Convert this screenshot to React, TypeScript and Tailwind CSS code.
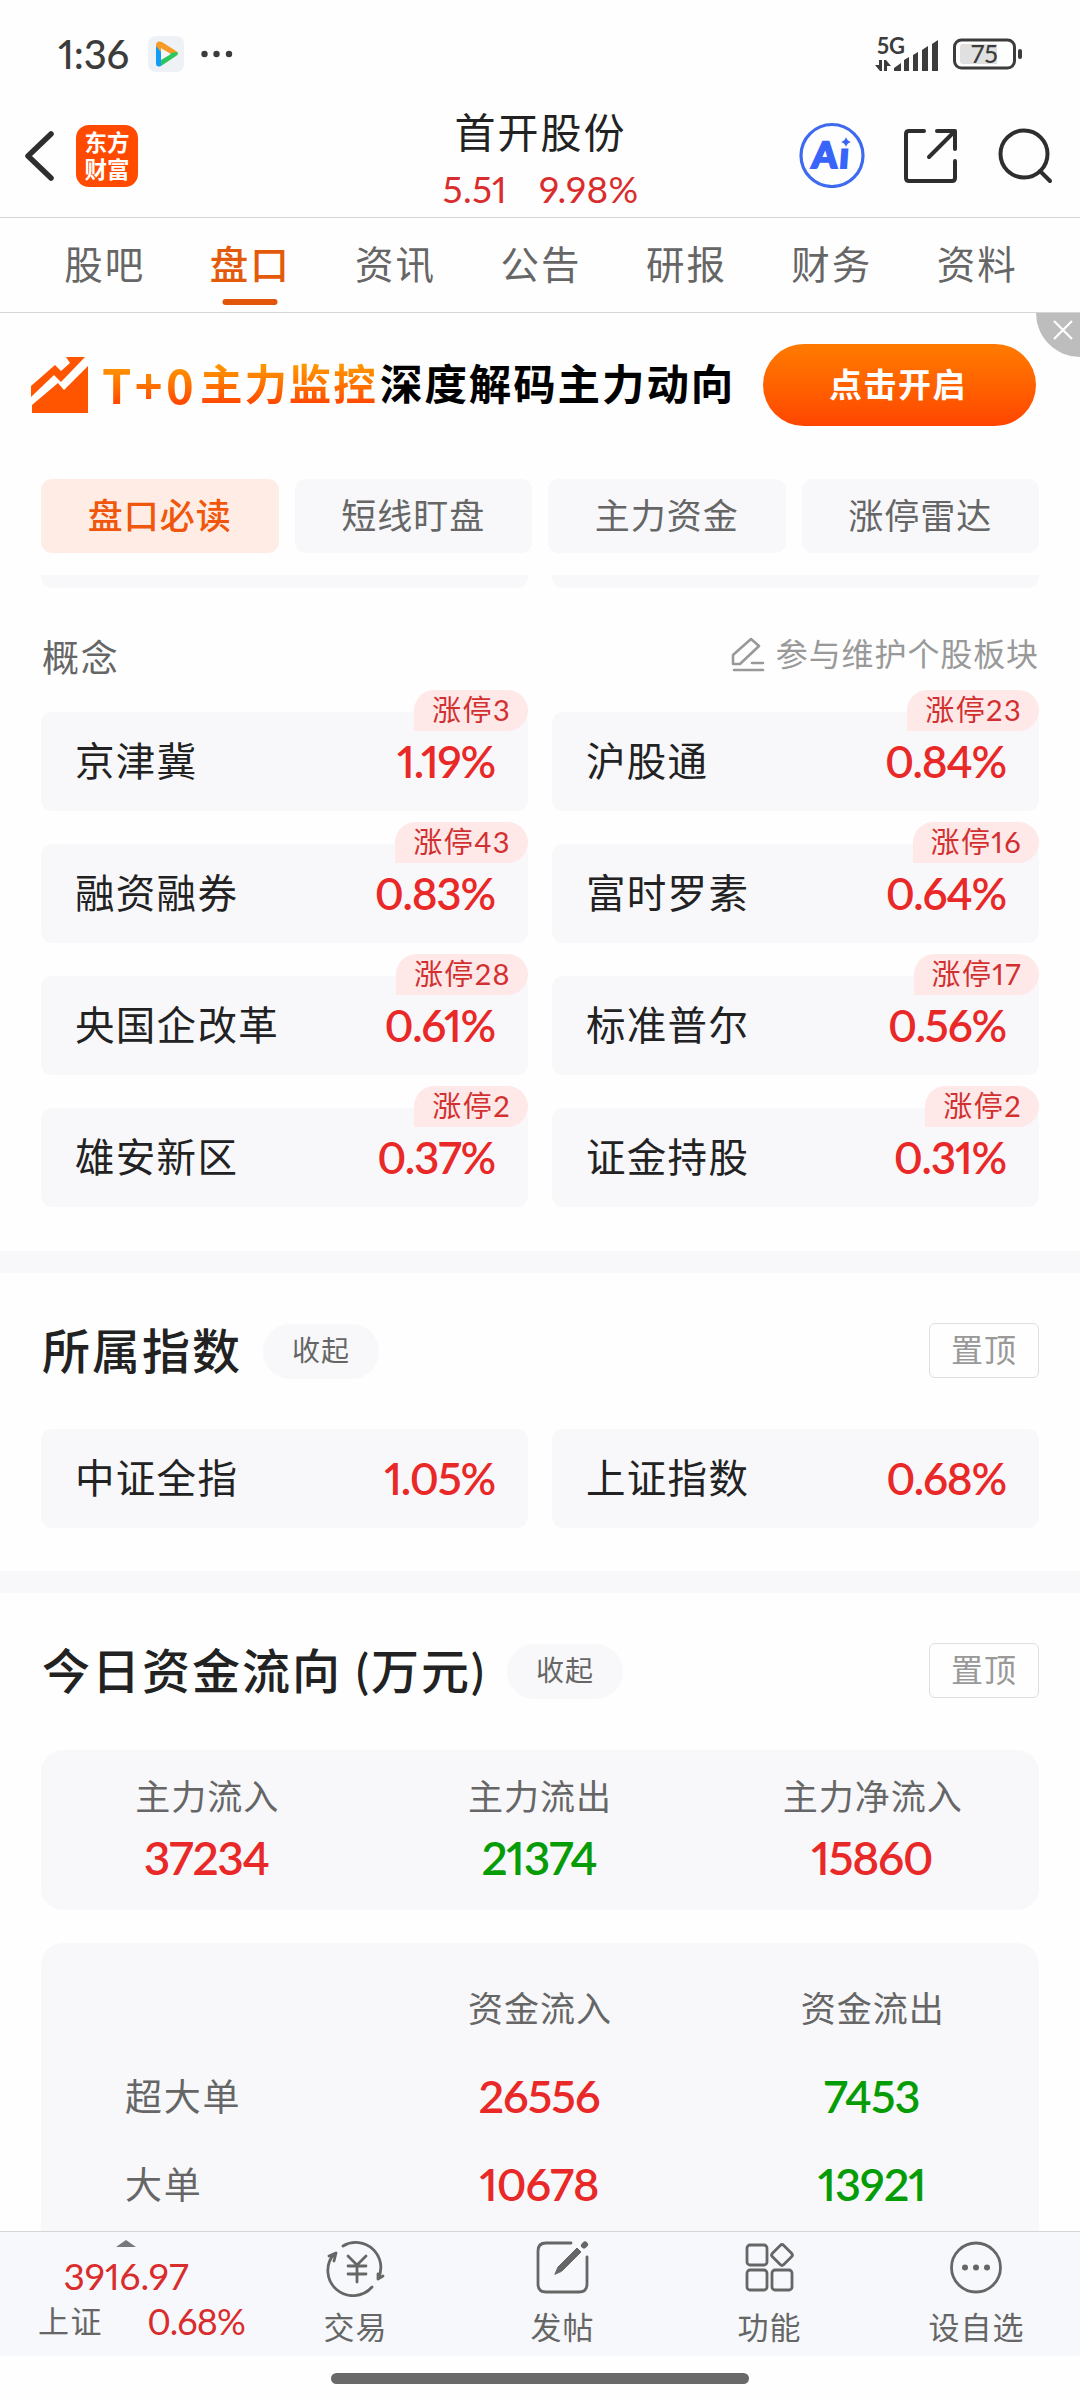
import type { ReactNode } from 'react'

const tabs = ['股吧', '盘口', '资讯', '公告', '研报', '财务', '资料']
const chips = ['盘口必读', '短线盯盘', '主力资金', '涨停雷达']

const concepts = [
  { name: '京津冀', value: '1.19%', limit: 3 },
  { name: '沪股通', value: '0.84%', limit: 23 },
  { name: '融资融券', value: '0.83%', limit: 43 },
  { name: '富时罗素', value: '0.64%', limit: 16 },
  { name: '央国企改革', value: '0.61%', limit: 28 },
  { name: '标准普尔', value: '0.56%', limit: 17 },
  { name: '雄安新区', value: '0.37%', limit: 2 },
  { name: '证金持股', value: '0.31%', limit: 2 },
]

const indexes = [
  { name: '中证全指', value: '1.05%' },
  { name: '上证指数', value: '0.68%' },
]

const summary = [
  { label: '主力流入', value: '37234', color: 'text-[#e92828]' },
  { label: '主力流出', value: '21374', color: 'text-[#069c06]' },
  { label: '主力净流入', value: '15860', color: 'text-[#e92828]' },
]

const orders = [
  { label: '超大单', inflow: '26556', outflow: '7453' },
  { label: '大单', inflow: '10678', outflow: '13921' },
]

function StatusBar() {
  return (
    <div className="flex h-[107px] shrink-0 items-center justify-between pl-[58px] pr-[57px] text-[#3c3c3c]">
      <div className="flex items-center">
        <span className="w-[73px] text-[40px] leading-none font-medium tracking-[-0.2px] whitespace-nowrap">1:36</span>
        <svg className="ml-[17px]" width="36" height="36" viewBox="0 0 36 36">
          <rect width="36" height="36" rx="8" fill="#eef1f5" />
          <path d="M8 10v17q0 5 5 3V12z" fill="#129cf5" />
          <path d="M8 10q0-6 6-4l14 9q3 2 1 4l-5 0-11-7v4z" fill="#f79a28" />
          <path d="M13 23l10-6 6-1q2 2-1 4L13 30z" fill="#2cc65a" />
          <path d="M13 13v11l10-6z" fill="#f4f6f8" />
        </svg>
        <svg className="ml-[17px]" width="32" height="8" viewBox="0 0 32 8" fill="currentColor">
          <circle cx="3.5" cy="4" r="3.2" />
          <circle cx="15.5" cy="4" r="3.2" />
          <circle cx="28" cy="4" r="3.2" />
        </svg>
      </div>
      <div className="flex items-center">
        <svg className="overflow-visible" width="64" height="44" viewBox="0 -6 64 44" fill="currentColor">
          <text x="2" y="16" fontSize="22" fontWeight="700" textLength="28">5G</text>
          <path d="M4 22h3v11H5L0 27h4zM9 22h2l5 6h-4v5H9z" />
          <path d="M19 33v-3l7-5v8zM29 33V22l5-3v14zM38 33V17l5-3v19zM47 33V12l6-4v25zM57 33V6l6-4v31z" />
        </svg>
        <svg className="ml-[14px]" width="70" height="32" viewBox="0 0 70 32">
          <rect x="1.5" y="2" width="60" height="28" rx="7" fill="none" stroke="currentColor" strokeWidth="3" />
          <path d="M10 6h34v20H10q-3 0-3-3V9q0-3 3-3z" fill="#e0e0e0" />
          <rect x="65" y="11" width="4" height="10" rx="2" fill="currentColor" />
          <text x="31.5" y="24.5" textAnchor="middle" fontSize="25" fontWeight="500" fill="currentColor">75</text>
        </svg>
      </div>
    </div>
  )
}

function Header() {
  return (
    <header className="grid h-[111px] shrink-0 grid-cols-3 border-b border-[#d6d6d6] text-[#2e2e2e]">
      <div className="flex items-start pl-[24px] pt-[18px]">
        <svg className="mt-[4px]" width="32" height="54" viewBox="0 0 32 54" fill="none" stroke="currentColor" strokeWidth="5.5" strokeLinecap="round" strokeLinejoin="round">
          <path d="M27 5L4 27l23 22" />
        </svg>
        <div className="ml-[20px] flex h-[62px] w-[62px] flex-col items-center justify-center rounded-[13px] bg-[#ff4a00] text-[22.5px] leading-[27px] font-bold text-white">
          <span>东方</span>
          <span>财富</span>
        </div>
      </div>
      <div className="flex flex-col items-center">
        <div className="mt-[1px] pl-[1px] text-[41px] leading-[50px] tracking-[2px] text-[#222]">首开股份</div>
        <div className="mt-[6px] flex gap-[32px] pl-[1px] text-[37px] leading-[50px] tracking-[0.3px] text-[#d92d2d]">
          <span>5.51</span>
          <span>9.98%</span>
        </div>
      </div>
      <div className="flex items-start justify-end pt-[15px] pr-[27px]">
        <svg width="66" height="66" viewBox="0 0 66 66">
          <circle cx="33" cy="33.5" r="31" fill="none" stroke="#3d6bf0" strokeWidth="3.2" />
          <g transform="skewX(-4)" fill="#3864fa" stroke="#3864fa" strokeWidth="2">
            <text x="15.5" y="46" fontSize="36" fontWeight="900">A</text>
            <text x="43" y="46" fontSize="36" fontWeight="900">ı</text>
          </g>
          <path d="M47 15q1 4 5 5-4 1-5 5-1-4-5-5 4-1 5-5z" fill="#3864fa" />
        </svg>
        <svg className="mt-[6px] ml-[38px]" width="56" height="56" viewBox="0 0 56 56" fill="none" stroke="currentColor" strokeWidth="4" strokeLinecap="round" strokeLinejoin="round">
          <path d="M21 3H6q-3 0-3 3v44q0 3 3 3h43q3 0 3-3V33M34 3h18v18M52 3L26 29" />
        </svg>
        <svg className="mt-[5px] ml-[38px]" width="56" height="58" viewBox="0 0 56 58" fill="none" stroke="currentColor" strokeWidth="4" strokeLinecap="round">
          <circle cx="27" cy="27" r="23.5" />
          <path d="M43 44l10 10" />
        </svg>
      </div>
    </header>
  )
}

function Tabs() {
  return (
    <nav className="grid h-[95px] shrink-0 grid-cols-7 border-b border-[#d6d6d6] pr-[30px] pl-[32px] text-[38.5px] leading-[93px] tracking-[2px] text-[#666]">
      {tabs.map((tab) => (
        <div key={tab} className={tab === '盘口' ? 'relative text-center font-medium text-[#e25a0a]' : 'text-center'}>
          {tab}
          {tab === '盘口' && (
            <span className="absolute bottom-[7px] left-1/2 h-[6px] w-[55px] -translate-x-1/2 rounded-full bg-[#e2560a]" />
          )}
        </div>
      ))}
    </nav>
  )
}

function Banner() {
  return (
    <div className="relative flex h-[144px] shrink-0 items-center pl-[31px]">
      <svg className="mb-[1px]" width="57" height="57" viewBox="0 0 57 57" fill="#ff5500">
        <path d="M0 30L24 9l6 6 9-8-4-6h19L30 26l-7-7L0 41z" />
        <path d="M1 49l26-22 6 7L57 10v47H1z" />
      </svg>
      <div className="mb-[2px] ml-[14px] flex w-[640px] text-[42.5px] leading-[60px] font-bold tracking-[1.9px] whitespace-nowrap">
        <span className="w-[98px] bg-linear-to-b from-[#ff9500] from-20% to-[#ff4a00] to-80% bg-clip-text font-['Noto_Sans_CJK_SC',sans-serif] text-[47px] leading-[59px] tracking-[3.5px] text-transparent">T+0</span>
        <span className="w-[180px] bg-linear-to-b from-[#ff9500] from-20% to-[#ff4a00] to-80% bg-clip-text text-transparent">主力监控</span>
        <span className="text-black">深度解码主力动向</span>
      </div>
      <button className="mb-[1px] ml-[21px] h-[82px] w-[273px] rounded-full bg-linear-to-b from-[#ff7a00] to-[#ff4400] pr-[3px] text-[33px] font-bold tracking-[1.5px] text-white">
        点击开启
      </button>
      <div className="absolute top-0 right-0 h-[44px] w-[44px] rounded-bl-[44px] bg-[#bdbdbd]">
        <svg className="mt-[7px] ml-[17px]" width="20" height="20" viewBox="0 0 20 20" stroke="white" strokeWidth="2.2">
          <path d="M1 1l18 18M19 1L1 19" />
        </svg>
      </div>
    </div>
  )
}

function StockCard({ name, value, limit }: { name: string; value: string; limit?: number }) {
  return (
    <div className="relative flex h-[99px] items-center justify-between rounded-[11px] bg-[#f8f8fb] pr-[33px] pl-[34px]">
      <span className="pb-[2px] text-[39.5px] leading-none tracking-[1.3px] text-[#222]">{name}</span>
      <span className="pb-[1px] text-[44px] leading-none font-semibold tracking-[-1.2px] text-[#e92828]">{value}</span>
      {limit !== undefined && (
        <span className="absolute -top-[22px] right-0 h-[41px] rounded-[21px] rounded-bl-none bg-[#fee8e8] pr-[17px] pl-[18px] text-[29px] leading-[40px] tracking-[1.4px] text-[#d23030]">
          涨停{limit}
        </span>
      )}
    </div>
  )
}

function SectionTitle({ children }: { children: ReactNode }) {
  return (
    <div className="flex h-[156px] items-center">
      <h2 className="pl-[1px] text-[48px] leading-none font-medium tracking-[2px] whitespace-pre text-[#222]">{children}</h2>
      <span className="ml-[21px] h-[55px] w-[116px] rounded-full bg-[#f8f8fb] text-center text-[28px] leading-[53px] tracking-[1px] text-[#666]">收起</span>
      <span className="mb-[1px] ml-auto h-[55px] w-[110px] rounded-[6px] border border-[#dfdfdf] text-center text-[32px] leading-[52px] tracking-[1px] text-[#999]">置顶</span>
    </div>
  )
}

function FundFlow() {
  return (
    <section className="px-[41px]">
      <SectionTitle>今日资金流向 (万元)</SectionTitle>
      <div className="mt-[1px] grid h-[160px] grid-cols-3 rounded-[22px] bg-[#f8f8fb] pt-[20px] text-center">
        {summary.map((item) => (
          <div key={item.label}>
            <div className="text-[35px] leading-[52px] tracking-[1px] text-[#666]">{item.label}</div>
            <div className={`mt-[6px] pr-[2px] text-[46px] leading-[60px] font-semibold tracking-[-1.3px] ${item.color}`}>{item.value}</div>
          </div>
        ))}
      </div>
      <div className="mt-[33px] rounded-t-[22px] bg-[#f8f8fb] pt-[21px] pb-[60px]">
        <div className="grid h-[88px] grid-cols-3 items-center text-center text-[35px] tracking-[1px] text-[#666]">
          <span />
          <span>资金流入</span>
          <span>资金流出</span>
        </div>
        {orders.map((row) => (
          <div key={row.label} className="grid h-[88px] grid-cols-3 items-center pt-[2px] text-center">
            <span className="pl-[84px] text-left text-[37px] tracking-[1.8px] text-[#666]">{row.label}</span>
            <span className="pr-[2px] text-[45px] font-semibold tracking-[-1px] text-[#e92828]">{row.inflow}</span>
            <span className="pr-[2px] text-[45px] font-semibold tracking-[-1px] text-[#069c06]">{row.outflow}</span>
          </div>
        ))}
      </div>
    </section>
  )
}

function BarItem({ label, children }: { label: string; children: ReactNode }) {
  return (
    <div className="flex w-[207px] flex-col items-center pt-[5px]">
      <svg width="60" height="60" viewBox="0 0 60 60" fill="none" stroke="currentColor" strokeWidth="2.8" strokeLinecap="round" strokeLinejoin="round">
        {children}
      </svg>
      <span className="mt-[8px] text-[31px] leading-[44px] tracking-[1px]">{label}</span>
    </div>
  )
}

function BottomBar() {
  return (
    <div className="flex h-[125px] shrink-0 border-t border-[#d6d6d6] bg-[#f7f8fb] text-[#666]">
      <div className="flex w-[252px] flex-col items-center pt-[8px]">
        <svg width="20" height="7" viewBox="0 0 20 7" fill="#77777c">
          <path d="M10 0l10 7H0z" />
        </svg>
        <div className="mt-[7px] text-[37px] leading-[44px] text-[#d92d2d]">3916.97</div>
        <div className="flex w-full items-center justify-between pr-[7px] pl-[38px] leading-[46px]">
          <span className="text-[31px] tracking-[1.5px]">上证</span>
          <span className="text-[36px] tracking-[-0.9px] text-[#d92d2d]">0.68%</span>
        </div>
      </div>
      <BarItem label="交易">
        <path d="M17 9A25 25 0 0 1 52 42M52 42l0-5M52 42l5-3M46 50A25 25 0 0 1 8 17M3 19l7-3-2 8" />
        <path d="M22 19l9 9 9-9M31 28v17M22 29h18M22 37h18" />
      </BarItem>
      <BarItem label="发帖">
        <path d="M38 6H13q-8 0-8 8v33q0 8 8 8h33q8 0 8-8V20" />
        <path d="M22 37l3-7 19-19 4 4-19 19z" fill="currentColor" strokeWidth="1" />
        <path d="M51 8.5l1-1" strokeWidth="6" />
      </BarItem>
      <BarItem label="功能">
        <rect x="7" y="8" width="20" height="20" rx="3" />
        <rect x="7" y="33" width="20" height="20" rx="3" />
        <rect x="32" y="33" width="20" height="20" rx="3" />
        <rect x="34" y="10" width="16" height="16" rx="2.5" transform="rotate(45 42 18)" />
      </BarItem>
      <BarItem label="设自选">
        <circle cx="29" cy="30.5" r="24.5" />
        <g fill="currentColor" stroke="none">
          <circle cx="18" cy="30.5" r="3" />
          <circle cx="29" cy="30.5" r="3" />
          <circle cx="40" cy="30.5" r="3" />
        </g>
      </BarItem>
    </div>
  )
}

export default function App() {
  return (
    <div className="flex h-[2400px] w-[1080px] flex-col overflow-hidden bg-[#fefefe] font-['Lato','Noto_Sans_CJK_SC',sans-serif] proportional-nums">
      <StatusBar />
      <Header />
      <Tabs />
      <Banner />
      <div className="mt-[22px] grid shrink-0 grid-cols-4 gap-[16px] px-[41px]">
        {chips.map((chip, i) => (
          <div
            key={chip}
            className={
              i === 0
                ? 'h-[74px] rounded-[11px] bg-[#ffede5] text-center text-[35px] leading-[72px] font-medium tracking-[1px] text-[#f0570c]'
                : 'h-[74px] rounded-[11px] bg-[#f8f8fb] text-center text-[35px] leading-[72px] tracking-[1px] text-[#666]'
            }
          >
            {chip}
          </div>
        ))}
      </div>
      <main className="mt-[22px] min-h-0 flex-1 overflow-hidden">
        <section className="px-[41px] pb-[44px]">
          <div className="grid grid-cols-2 gap-x-[24px]">
            <div className="h-[13px] rounded-b-[11px] bg-[#f8f8fb]" />
            <div className="h-[13px] rounded-b-[11px] bg-[#f8f8fb]" />
          </div>
          <div className="flex h-[124px] items-center justify-between text-[#999]">
            <span className="pt-[14px] pl-[1px] text-[37px] leading-none tracking-[1.8px] text-[#666]">概念</span>
            <div className="flex items-center pt-[8px]">
              <svg className="mt-[2px]" width="34" height="36" viewBox="0 0 34 36" fill="none" stroke="currentColor" strokeWidth="2.6" strokeLinecap="round" strokeLinejoin="round">
                <path d="M2 27v-9L20 2l8 7L9 27zM21 26h11M3 33h29" />
              </svg>
              <span className="ml-[11px] text-[32px] leading-none tracking-[0.9px]">参与维护个股板块</span>
            </div>
          </div>
          <div className="grid grid-cols-2 gap-x-[24px] gap-y-[33px]">
            {concepts.map((item) => (
              <StockCard key={item.name} {...item} />
            ))}
          </div>
        </section>
        <div className="h-[22px] bg-[#f8f8fb]" />
        <section className="px-[41px] pb-[43px]">
          <SectionTitle>所属指数</SectionTitle>
          <div className="grid grid-cols-2 gap-x-[24px]">
            {indexes.map((item) => (
              <StockCard key={item.name} {...item} />
            ))}
          </div>
        </section>
        <div className="h-[22px] bg-[#f8f8fb]" />
        <FundFlow />
      </main>
      <BottomBar />
      <div className="flex h-[44px] shrink-0 justify-center pt-[17px]">
        <div className="h-[11px] w-[418px] rounded-full bg-[#696969]" />
      </div>
    </div>
  )
}
